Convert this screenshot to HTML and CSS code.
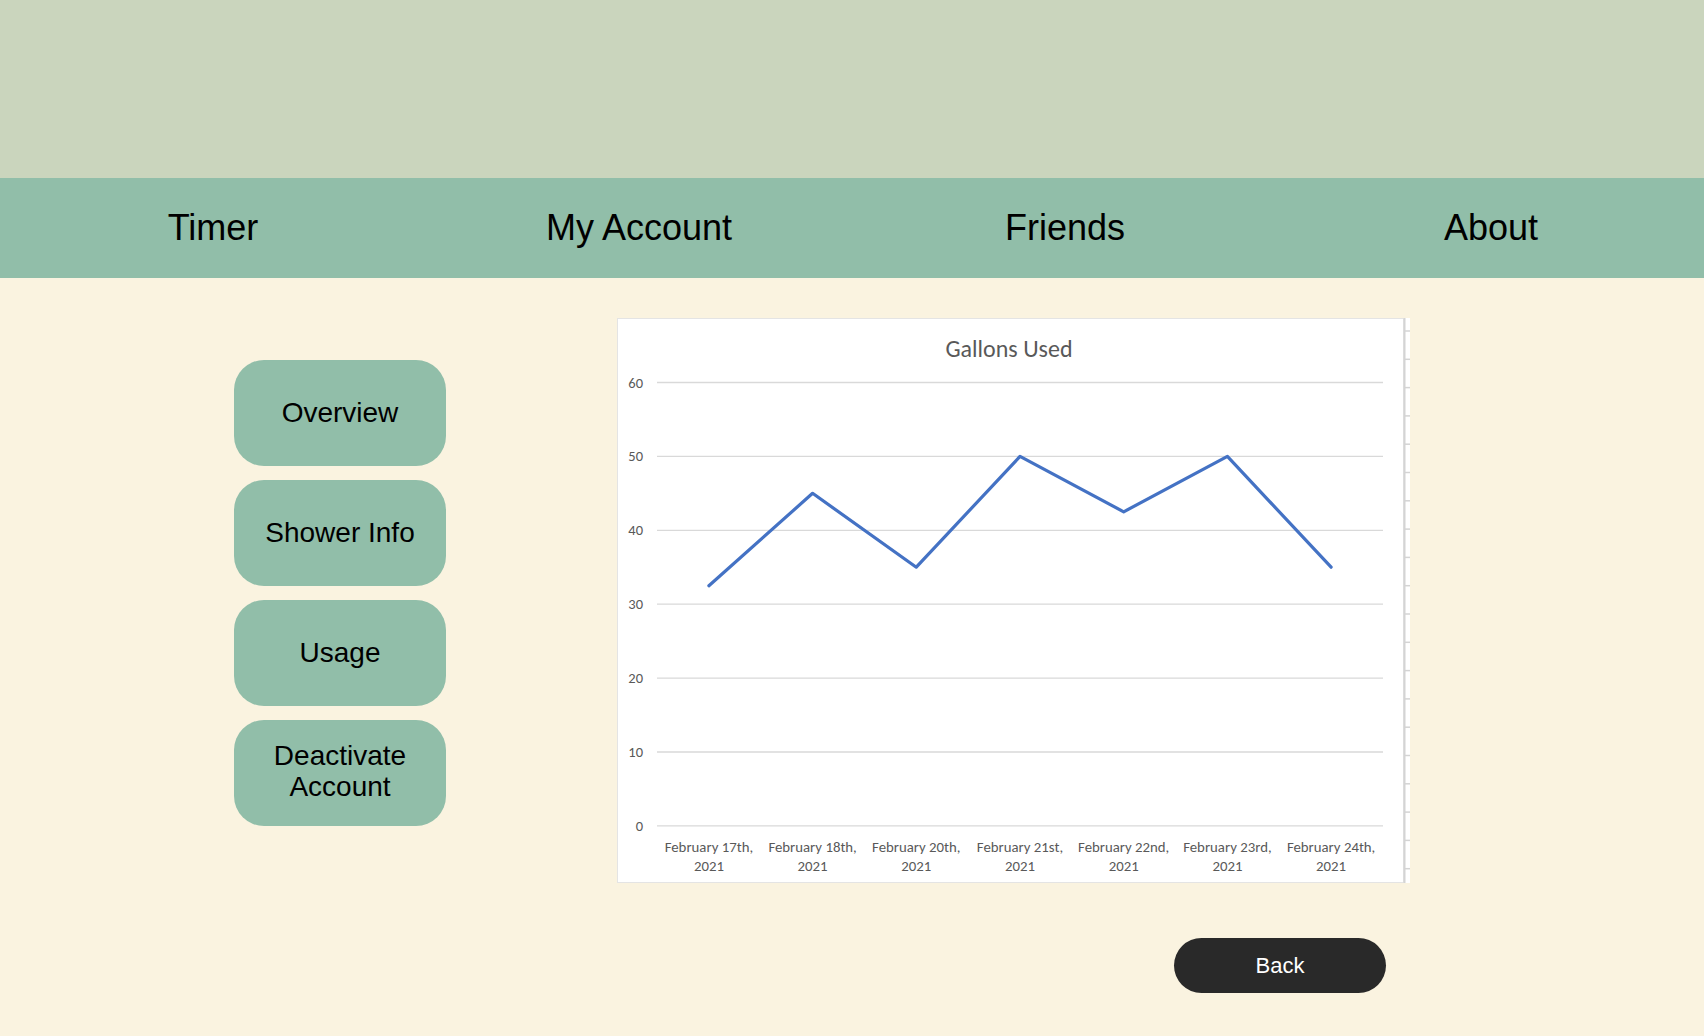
FILE: index.html
```html
<!DOCTYPE html>
<html lang="en">
<head>
<meta charset="utf-8">
<title>Usage</title>
<link rel="stylesheet" href="styles.css">
</head>
<body>
<header class="top"></header>
<nav class="nav">
  <a class="nav-item">Timer</a>
  <a class="nav-item">My Account</a>
  <a class="nav-item">Friends</a>
  <a class="nav-item">About</a>
</nav>
<main class="content">
  <aside class="side">
    <div class="side-btn">Overview</div>
    <div class="side-btn">Shower Info</div>
    <div class="side-btn">Usage</div>
    <div class="side-btn side-btn-two">Deactivate<br>Account</div>
  </aside>
  <section class="panel">
    <div class="chart">
      <svg class="chart-svg" width="793" height="565" viewBox="0 0 793 565">
        <rect x="0.5" y="0.5" width="786" height="564" fill="#ffffff" stroke="#e4e4e4" stroke-width="1"/>
        <rect x="788" y="0" width="5" height="565" fill="#ffffff"/>
        <line x1="787.5" y1="0" x2="787.5" y2="565" stroke="#d4d4d4" stroke-width="2"/>
        <g stroke="#d4d4d4" stroke-width="1.5">
          <line x1="788" x2="793" y1="13" y2="13"/>
          <line x1="788" x2="793" y1="41.3" y2="41.3"/>
          <line x1="788" x2="793" y1="69.6" y2="69.6"/>
          <line x1="788" x2="793" y1="97.9" y2="97.9"/>
          <line x1="788" x2="793" y1="126.2" y2="126.2"/>
          <line x1="788" x2="793" y1="154.5" y2="154.5"/>
          <line x1="788" x2="793" y1="182.8" y2="182.8"/>
          <line x1="788" x2="793" y1="211.1" y2="211.1"/>
          <line x1="788" x2="793" y1="239.4" y2="239.4"/>
          <line x1="788" x2="793" y1="267.7" y2="267.7"/>
          <line x1="788" x2="793" y1="296" y2="296"/>
          <line x1="788" x2="793" y1="324.3" y2="324.3"/>
          <line x1="788" x2="793" y1="352.6" y2="352.6"/>
          <line x1="788" x2="793" y1="380.9" y2="380.9"/>
          <line x1="788" x2="793" y1="409.2" y2="409.2"/>
          <line x1="788" x2="793" y1="437.5" y2="437.5"/>
          <line x1="788" x2="793" y1="465.8" y2="465.8"/>
          <line x1="788" x2="793" y1="494.1" y2="494.1"/>
          <line x1="788" x2="793" y1="522.4" y2="522.4"/>
          <line x1="788" x2="793" y1="550.7" y2="550.7"/>
        </g>
        <text class="chart-title" x="392" y="30" text-anchor="middle" dominant-baseline="central">Gallons Used</text>
        <g stroke="#d9d9d9" stroke-width="1.3">
          <line x1="40" x2="766" y1="64.5" y2="64.5"/>
          <line x1="40" x2="766" y1="138.4" y2="138.4"/>
          <line x1="40" x2="766" y1="212.3" y2="212.3"/>
          <line x1="40" x2="766" y1="286.2" y2="286.2"/>
          <line x1="40" x2="766" y1="360.1" y2="360.1"/>
          <line x1="40" x2="766" y1="434" y2="434"/>
          <line x1="40" x2="766" y1="507.9" y2="507.9"/>
        </g>
        <g class="axis-y" text-anchor="end" dominant-baseline="central">
          <text x="26" y="64.5">60</text>
          <text x="26" y="138.4">50</text>
          <text x="26" y="212.3">40</text>
          <text x="26" y="286.2">30</text>
          <text x="26" y="360.1">20</text>
          <text x="26" y="434">10</text>
          <text x="26" y="507.9">0</text>
        </g>
        <g class="axis-x" text-anchor="middle" dominant-baseline="central">
          <text x="91.9" y="528.5">February 17th,</text>
          <text x="91.9" y="548">2021</text>
          <text x="195.6" y="528.5">February 18th,</text>
          <text x="195.6" y="548">2021</text>
          <text x="299.3" y="528.5">February 20th,</text>
          <text x="299.3" y="548">2021</text>
          <text x="403" y="528.5">February 21st,</text>
          <text x="403" y="548">2021</text>
          <text x="506.7" y="528.5">February 22nd,</text>
          <text x="506.7" y="548">2021</text>
          <text x="610.4" y="528.5">February 23rd,</text>
          <text x="610.4" y="548">2021</text>
          <text x="714.1" y="528.5">February 24th,</text>
          <text x="714.1" y="548">2021</text>
        </g>
        <polyline fill="none" stroke="#4472c4" stroke-width="3.2" stroke-linejoin="round" stroke-linecap="round"
          points="91.9,267.7 195.6,175.3 299.3,249.2 403,138.4 506.7,193.8 610.4,138.4 714.1,249.2"/>
      </svg>
    </div>
    <button class="back">Back</button>
  </section>
</main>
</body>
</html>
```

FILE: styles.css
```css
html, body {
  margin: 0;
  padding: 0;
}
body {
  background: #faf3e0;
  font-family: "Liberation Sans", Arial, Helvetica, sans-serif;
  color: #000;
  height: 1036px;
  overflow: hidden;
}
.top {
  height: 178px;
  background: #cad5bd;
}
.nav {
  height: 100px;
  background: #91bea9;
  display: flex;
}
.nav-item {
  flex: 1;
  text-align: center;
  line-height: 100px;
  font-size: 36px;
  color: #000;
  text-decoration: none;
}
.content {
  display: flex;
  align-items: flex-start;
  padding-left: 234px;
}
.side {
  width: 212px;
  margin-top: 82px;
  display: flex;
  flex-direction: column;
  gap: 14px;
}
.side-btn {
  height: 106px;
  border-radius: 30px;
  background: #91bea9;
  display: flex;
  align-items: center;
  justify-content: center;
  text-align: center;
  font-size: 28px;
  line-height: 32px;
}
.side-btn-two {
  line-height: 31px;
  padding-bottom: 4px;
  height: 102px;
}
.panel {
  margin-left: 171px;
  margin-top: 40px;
  display: flex;
  flex-direction: column;
  align-items: flex-end;
}
.chart {
  width: 793px;
  height: 565px;
}
.chart-svg {
  display: block;
}
.chart-title {
  font-family: Carlito, Lato, "Open Sans", sans-serif;
  font-size: 24px;
  fill: #595959;
}
.axis-y text,
.axis-x text {
  font-family: Carlito, Lato, "Open Sans", sans-serif;
  font-size: 14.8px;
  fill: #595959;
}
.axis-y text {
  font-size: 14.5px;
}
.back {
  margin-top: 55px;
  margin-right: 24px;
  width: 212px;
  height: 55px;
  border: none;
  border-radius: 28px;
  background: #292929;
  color: #fff;
  font-family: "Liberation Sans", Arial, sans-serif;
  font-size: 22px;
  padding: 0;
}
```
